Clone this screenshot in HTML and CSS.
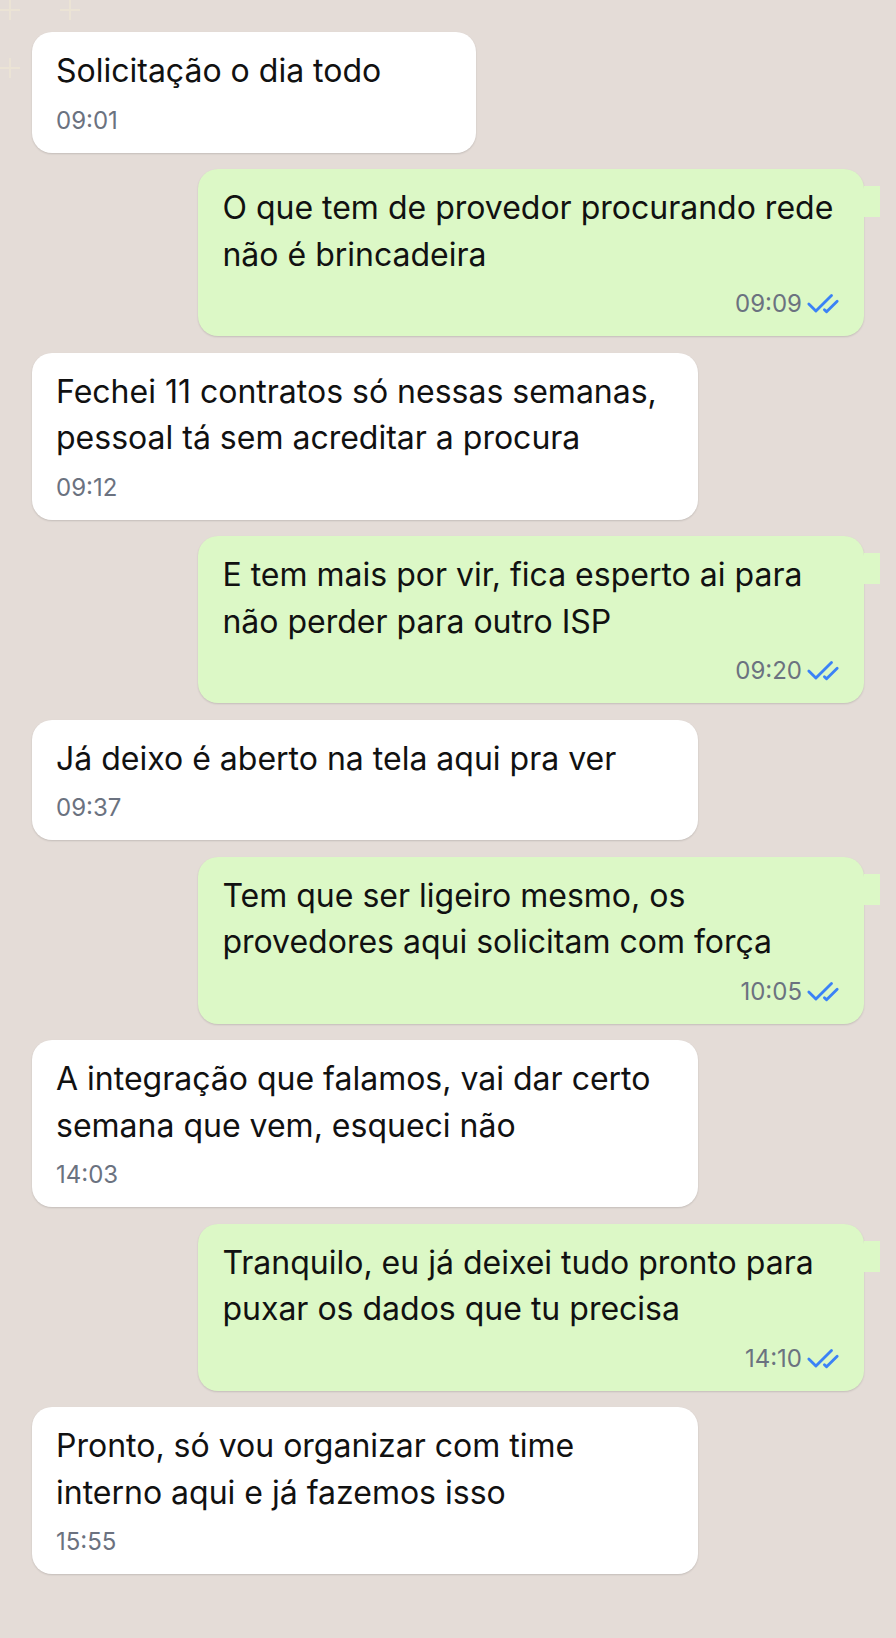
FILE: index.html
```html
<!DOCTYPE html>
<html>
<head>
  <title>Conversa</title>
  <link rel="stylesheet" href="styles.css">
</head>
<body>
  <div class="chat">

    <div class="msg in short">
      <p class="text">Solicitação o dia todo</p>
      <div class="meta">09:01</div>
    </div>

    <div class="msg out">
      <p class="text">O que tem de provedor procurando rede<br>não é brincadeira</p>
      <div class="meta">09:09
        <svg class="ticks" viewBox="0 0 24 24"><path d="M18 6 7 17l-5-5"/><path d="m22 10-7.5 7.5L13 16"/></svg>
      </div>
    </div>

    <div class="msg in">
      <p class="text">Fechei 11 contratos só nessas semanas,<br>pessoal tá sem acreditar a procura</p>
      <div class="meta">09:12</div>
    </div>

    <div class="msg out">
      <p class="text">E tem mais por vir, fica esperto ai para<br>não perder para outro ISP</p>
      <div class="meta">09:20
        <svg class="ticks" viewBox="0 0 24 24"><path d="M18 6 7 17l-5-5"/><path d="m22 10-7.5 7.5L13 16"/></svg>
      </div>
    </div>

    <div class="msg in">
      <p class="text">Já deixo é aberto na tela aqui pra ver</p>
      <div class="meta">09:37</div>
    </div>

    <div class="msg out">
      <p class="text">Tem que ser ligeiro mesmo, os<br>provedores aqui solicitam com força</p>
      <div class="meta">10:05
        <svg class="ticks" viewBox="0 0 24 24"><path d="M18 6 7 17l-5-5"/><path d="m22 10-7.5 7.5L13 16"/></svg>
      </div>
    </div>

    <div class="msg in">
      <p class="text">A integração que falamos, vai dar certo<br>semana que vem, esqueci não</p>
      <div class="meta">14:03</div>
    </div>

    <div class="msg out">
      <p class="text">Tranquilo, eu já deixei tudo pronto para<br>puxar os dados que tu precisa</p>
      <div class="meta">14:10
        <svg class="ticks" viewBox="0 0 24 24"><path d="M18 6 7 17l-5-5"/><path d="m22 10-7.5 7.5L13 16"/></svg>
      </div>
    </div>

    <div class="msg in">
      <p class="text">Pronto, só vou organizar com time<br>interno aqui e já fazemos isso</p>
      <div class="meta">15:55</div>
    </div>

  </div>
</body>
</html>
```

FILE: styles.css
```css
body {
  margin: 0;
  padding: 0;
  background: #e4dcd7;
  font-family: "Inter", "Noto Sans", sans-serif;
  color: #111;
}

.chat {
  min-height: 1638px;
  box-sizing: border-box;
  padding: 32px;
  display: flex;
  flex-direction: column;
  gap: 16.5px;
  background-image: url("data:image/svg+xml;utf8,<svg xmlns='http://www.w3.org/2000/svg' width='100' height='90'><g stroke='%23ebe3d5' stroke-width='2' fill='none'><path d='M10 0v20M0 10h20'/><path d='M70 0v20M60 10h20'/><path d='M10 58v20M0 68h20'/></g></svg>");
  background-repeat: no-repeat;
}

.msg {
  position: relative;
  box-sizing: border-box;
  width: 80%;
  padding: 16px 24px;
  border-radius: 20px;
  box-shadow: 0 1px 2px rgba(0, 0, 0, 0.14);
}

.msg.in {
  align-self: flex-start;
  background: #fff;
}

.msg.short { width: 444px; }

.msg.out {
  align-self: flex-end;
  background: #dcf8c6;
}

/* little tail on the sent messages */
.msg.out::after {
  content: "";
  position: absolute;
  right: -16px;
  top: 17px;
  width: 16px;
  height: 31px;
  background: #dcf8c6;
}

.text {
  margin: 0;
  font-size: 32px;
  line-height: 46.5px;
  white-space: nowrap;
}

.meta {
  margin-top: 10px;
  height: 32px;
  display: flex;
  align-items: center;
  gap: 4px;
  font-size: 24px;
  line-height: 32px;
  color: #6b7280;
}

.msg.out .meta { justify-content: flex-end; }

.ticks {
  width: 34px;
  height: 34px;
  fill: none;
  stroke: #3b82f6;
  stroke-width: 2;
  stroke-linecap: round;
  stroke-linejoin: round;
}
```
